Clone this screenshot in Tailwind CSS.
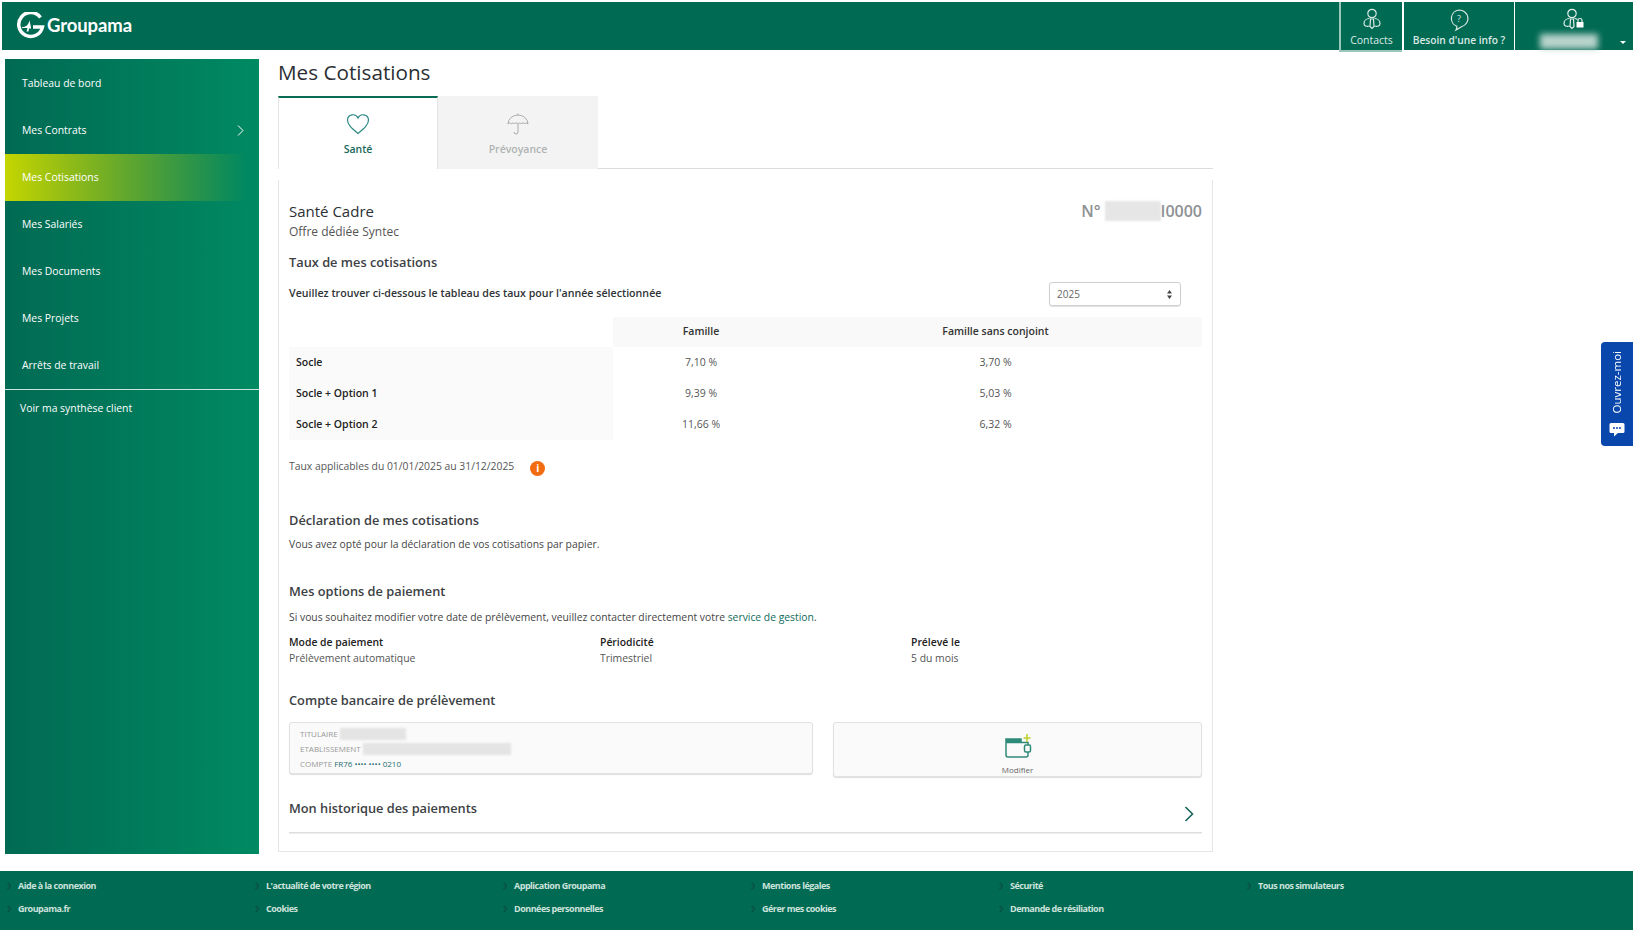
<!DOCTYPE html>
<html lang="fr">
<head>
  <meta charset="UTF-8" />
  <title>Mes Cotisations</title>
  <script src="https://cdn.jsdelivr.net/npm/@tailwindcss/browser@4"></script>
</head>
<body class="relative h-[930px] w-[1633px] overflow-hidden bg-white font-['Open_Sans',sans-serif] text-[#333]">
  <!-- header -->
  <header class="ml-[2px] mt-[2px] flex h-[48px] items-stretch justify-between bg-[#016a53] pr-[2px] text-white">
    <div class="flex items-center pl-[14px]">
      <svg width="30" height="28" viewBox="0 0 30 28" fill="none" stroke="#fff">
        <path d="M24.500 5.500A12 12 0 1 0 26.500 15H17" stroke-width="3.500" />
        <path d="M6 15c4 0 6-1.500 7.500-6.500.7 3 1 5 1.500 6.500v1.500h-2l-.5 3h-2l1-3.500H6z" fill="#fff" stroke="none" />
      </svg>
      <span class="ml-[1px] font-['Lato',sans-serif] text-[18.500px] font-bold tracking-[-0.1px]">Groupama</span>
    </div>
    <div class="flex">
      <div class="flex h-[50px] w-[63px] flex-col items-center border-b-2 border-l-2 border-[#9cc7bb]">
        <svg class="mt-[6px]" width="22" height="22" viewBox="0 0 22 22" fill="none" stroke="#d9e9e4" stroke-width="1.200">
          <circle cx="11" cy="5.500" r="4.200" />
          <path d="M8.500 10.500C5 10.500 3 13 3 15.500S5.500 19 8.500 18M13.500 10.500c3.500 0 5.500 2.500 5.500 5s-2.500 3.500-5.500 2.500" />
          <path d="M9.500 11h3l.5 7.500-2 2-2-2z" />
        </svg>
        <span class="mt-[2px] text-[10.500px] leading-[16px] text-[#dcebe6]">Contacts</span>
      </div>
      <div class="flex w-[113px] flex-col items-center border-l-2 border-r border-white">
        <svg class="mt-[6px]" width="22" height="24" viewBox="0 0 22 24" fill="none" stroke="#d9e9e4" stroke-width="1.200">
          <path d="M11 2a9 8.500 0 0 1 3 16.500c-2 .7-4 2.500-6 3.500.8-1.500 1-2.500.8-3.700A8.700 8.500 0 0 1 11 2z" />
          <text x="11" y="14" text-anchor="middle" font-size="9" fill="#d9e9e4" stroke="none" font-family="Open Sans">?</text>
        </svg>
        <span class="text-[10.200px] font-semibold leading-[16px] text-[#dcebe6]">Besoin d'une info ?</span>
      </div>
      <div class="relative flex w-[116px] flex-col items-center">
        <svg class="mt-[6px] ml-[2px]" width="24" height="22" viewBox="0 0 24 22" fill="none" stroke="#e3efeb" stroke-width="1.200">
          <circle cx="10" cy="5.500" r="4.200" />
          <path d="M7.500 10.500C4 10.500 2 13 2 15.500S4.500 19 7.500 18M12.500 10.500c1 0 2 .3 3 .9" />
          <path d="M8.500 11h3l.5 7.500-2 2-2-2z" />
          <rect x="14.500" y="14" width="7" height="5.500" fill="#fff" stroke="none" />
          <path d="M16 14v-1.500a2 2 0 0 1 4 0V14" />
        </svg>
        <div class="mt-[4px] h-[15px] w-[58px] -translate-x-[4px] bg-[#b9d4cc] blur-[3px]"></div>
        <span class="absolute bottom-[6px] right-[5px] h-0 w-0 border-x-[3px] border-t-[3px] border-x-transparent border-t-white"></span>
      </div>
    </div>
  </header>

  <div class="flex items-start">
    <!-- sidebar -->
    <aside class="ml-[5px] mt-[9px] h-[795px] w-[254px] bg-gradient-to-r from-[#016a53] to-[#008a62] pt-px text-[10.400px] text-white">
      <nav class="border-b border-[#cfe3dd]">
        <a class="flex h-[47px] items-center pl-[17px]">Tableau de bord</a>
        <a class="flex h-[47px] items-center justify-between pl-[17px] pr-[15px]">Mes Contrats
          <svg width="7" height="11" viewBox="0 0 7 11" fill="none" stroke="#fff" stroke-width="1"><path d="M1 .5l5 5-5 5" /></svg>
        </a>
        <a class="flex h-[47px] items-center bg-gradient-to-r from-[#c4d600] to-[#008a62]/0 to-95% pl-[17px]">Mes Cotisations</a>
        <a class="flex h-[47px] items-center pl-[17px]">Mes Salariés</a>
        <a class="flex h-[47px] items-center pl-[17px]">Mes Documents</a>
        <a class="flex h-[47px] items-center pl-[17px]">Mes Projets</a>
        <a class="flex h-[47px] items-center pl-[17px]">Arrêts de travail</a>
      </nav>
      <a class="mt-[9px] block pl-[15px] leading-[18px]">Voir ma synthèse client</a>
    </aside>

    <main class="ml-[19px] w-[935px]">
      <h1 class="mt-[5px] h-[41px] text-[20.700px] leading-[35px] text-[#2b2f33]">Mes Cotisations</h1>
      <!-- tabs -->
      <div class="flex h-[73px] border-b border-[#dcdcdc]">
        <div class="flex h-[73px] w-[160px] flex-col items-center border-x border-t-2 border-x-[#e3e3e3] border-t-[#0a6b54] bg-white">
          <svg class="mt-[15px]" width="24" height="22" viewBox="0 0 24 22" fill="none" stroke="#2c8a83" stroke-width="1.200">
            <path d="M12 20.500C6 15.500 1.500 12 1.500 7A5.500 5.500 0 0 1 12 5a5.500 5.500 0 0 1 10.500 2c0 5-4.500 8.500-10.500 13.500z" />
          </svg>
          <span class="mt-[6px] text-[10.500px] font-semibold leading-[16px] text-[#17685a]">Santé</span>
        </div>
        <div class="flex h-[73px] w-[160px] flex-col items-center bg-[#f3f3f3]">
          <svg class="mt-[16px]" width="24" height="24" viewBox="0 0 24 24" fill="none" stroke="#a9adad" stroke-width="1">
            <path d="M2 12a10 9 0 0 1 20 0c-1.500-1.500-2.500-1.500-3.300 0-1-1.500-2.500-1.500-3.300 0-1-1.500-2.500-1.500-3.400 0-1-1.500-2.500-1.500-3.400 0-1-1.500-2.300-1.500-3.300 0-1-1.500-3.300-1.500-3.300 0z" />
            <path d="M12 3V1.500M12 12v8a2 2 0 0 1-4 0" />
          </svg>
          <span class="mt-[5px] text-[10.500px] font-semibold leading-[16px] text-[#b0b3b3]">Prévoyance</span>
        </div>
      </div>

      <!-- card -->
      <section class="mt-[11px] h-[672px] border border-t-0 border-[#e6e6e6] px-[10px] pt-[21px]">
        <div class="flex h-[20px] items-center justify-between">
          <h2 class="text-[15px] text-[#2b2f33]">Santé Cadre</h2>
          <div class="flex items-center text-[16px] font-semibold text-[#8d9193]">N°
            <span class="ml-[4px] h-[20px] w-[56px] bg-[#e6e6e6] blur-[1px]"></span>
            <span>I0000</span>
          </div>
        </div>
        <p class="mt-[1px] text-[12px] leading-[20px] text-[#555]">Offre dédiée Syntec</p>
        <h3 class="mt-[10px] text-[12.800px] font-semibold leading-[20px] text-[#3c4144]">Taux de mes cotisations</h3>
        <div class="mt-[9px] flex h-[26px] items-center justify-between pr-[21px]">
          <p class="text-[10.650px] font-semibold text-[#2f3336]">Veuillez trouver ci-dessous le tableau des taux pour l'année sélectionnée</p>
          <div class="flex h-[24px] w-[132px] items-center justify-between rounded-[3px] border border-[#cfcfcf] pl-[7px] pr-[8px] text-[10px] text-[#666] shadow-[0_1px_1px_#e2e2e2]">
            2025
            <svg width="5" height="9" viewBox="0 0 5 9" fill="#444"><path d="M2.500 0l2.500 3.500H0zM2.500 9L0 5.500h5z" /></svg>
          </div>
        </div>
        <!-- rates table -->
        <div class="mt-[10px] grid grid-cols-[324px_176px_413px] text-[10.500px]">
          <div class="h-[30px]"></div>
          <div class="flex h-[30px] items-center justify-center bg-[#f9f9f9] font-semibold text-[#333]">Famille</div>
          <div class="flex h-[30px] items-center justify-center bg-[#f9f9f9] font-semibold text-[#333]">Famille sans conjoint</div>
          <div class="flex h-[31px] items-center bg-[#fafafa] pl-[7px] font-semibold text-[#222]">Socle</div>
          <div class="flex h-[31px] items-center justify-center text-[#555]">7,10 %</div>
          <div class="flex h-[31px] items-center justify-center text-[#555]">3,70 %</div>
          <div class="flex h-[31px] items-center bg-[#fafafa] pl-[7px] font-semibold text-[#222]">Socle + Option 1</div>
          <div class="flex h-[31px] items-center justify-center text-[#555]">9,39 %</div>
          <div class="flex h-[31px] items-center justify-center text-[#555]">5,03 %</div>
          <div class="flex h-[31px] items-center bg-[#fafafa] pl-[7px] font-semibold text-[#222]">Socle + Option 2</div>
          <div class="flex h-[31px] items-center justify-center text-[#555]">11,66 %</div>
          <div class="flex h-[31px] items-center justify-center text-[#555]">6,32 %</div>
        </div>
        <div class="mt-[17px] flex h-[20px] items-center text-[10.350px] text-[#555]">
          Taux applicables du 01/01/2025 au 31/12/2025
          <span class="ml-[16px] mt-[2px] flex h-[15px] w-[15px] items-center justify-center rounded-full bg-[#f26c11] text-[10px] font-bold leading-none text-white">i</span>
        </div>

        <h3 class="mt-[33px] text-[12.800px] font-semibold leading-[20px] text-[#3c4144]">Déclaration de mes cotisations</h3>
        <p class="mt-[4px] text-[10.350px] leading-[20px] text-[#444]">Vous avez opté pour la déclaration de vos cotisations par papier.</p>

        <h3 class="mt-[27px] text-[12.800px] font-semibold leading-[20px] text-[#3c4144]">Mes options de paiement</h3>
        <p class="mt-[6px] text-[10.350px] leading-[20px] text-[#444]">Si vous souhaitez modifier votre date de prélèvement, veuillez contacter directement votre <span class="text-[#0f6b5a]">service de gestion</span>.</p>
        <div class="mt-[7px] grid grid-cols-[311px_311px_1fr] text-[10.400px] leading-[16px]">
          <div><p class="font-semibold text-[#222]">Mode de paiement</p><p class="text-[#555]">Prélèvement automatique</p></div>
          <div><p class="font-semibold text-[#222]">Périodicité</p><p class="text-[#555]">Trimestriel</p></div>
          <div><p class="font-semibold text-[#222]">Prélevé le</p><p class="text-[#555]">5 du mois</p></div>
        </div>

        <h3 class="mt-[24px] text-[12.800px] font-semibold leading-[20px] text-[#3c4144]">Compte bancaire de prélèvement</h3>
        <div class="mt-[12px] flex items-start justify-between">
          <div class="h-[52px] w-[524px] rounded-[3px] border border-[#e2e2e2] bg-[#fafafa] pl-[10px] pt-[3px] text-[8px] leading-[15px] text-[#999] shadow-[0_1px_1px_#dedede]">
            <div class="flex items-center">TITULAIRE<span class="ml-[2px] h-[12px] w-[66px] bg-[#e4e4e4] blur-[1px]"></span></div>
            <div class="flex items-center">ETABLISSEMENT<span class="ml-[2px] h-[12px] w-[148px] bg-[#e4e4e4] blur-[1px]"></span></div>
            <div>COMPTE <span class="text-[#276d74]">FR76 •••• •••• 0210</span></div>
          </div>
          <div class="flex h-[55px] w-[369px] flex-col items-center rounded-[3px] border border-[#e2e2e2] bg-[#fafafa] shadow-[0_1px_1px_#dedede]">
            <svg class="mt-[11px]" width="28" height="25" viewBox="0 0 28 25" fill="none" stroke="#2f8a78" stroke-width="1.500">
              <path d="M2 8.500V21a2 2 0 0 0 2 2h18a2 2 0 0 0 2-2v-3M2 8.500h22V11" />
              <path d="M2 8V5h15v3h-15z" fill="#2f8a78" />
              <rect x="20.500" y="11" width="6" height="7" rx="1.500" />
              <path d="M23 0v8M19.500 4h7" stroke="#bcd02a" />
            </svg>
            <span class="mt-[5px] text-[8px] leading-[11px] text-[#666]">Modifier</span>
          </div>
        </div>
        <div class="mt-[21px] flex h-[35px] items-start justify-between border-b border-[#dedede] shadow-[0_1px_0_#eee]">
          <h3 class="text-[12.800px] font-semibold leading-[20px] text-[#3c4144]">Mon historique des paiements</h3>
          <svg class="mr-[8px] mt-[8px]" width="10" height="16" viewBox="0 0 10 16" fill="none" stroke="#17635a" stroke-width="1.600"><path d="M1.500 1l7 7-7 7" /></svg>
        </div>
      </section>
    </main>
  </div>

  <!-- footer -->
  <footer class="absolute bottom-0 left-0 h-[59px] w-full bg-[#016a53] pl-[7px] pt-[7px] text-[9px] font-bold tracking-[-0.5px] text-[#cde3dc]">
    <div class="grid grid-cols-[repeat(6,248px)] gap-y-[7px] leading-[16px]">
      <a class="flex items-center gap-[7px]"><svg width="4" height="8" viewBox="0 0 4 8" fill="none" stroke="#0b4f40" stroke-width="1.200"><path d="M.5.500L3.500 4 .5 7.500" /></svg>Aide à la connexion</a>
      <a class="flex items-center gap-[7px]"><svg width="4" height="8" viewBox="0 0 4 8" fill="none" stroke="#0b4f40" stroke-width="1.200"><path d="M.5.500L3.500 4 .5 7.500" /></svg>L'actualité de votre région</a>
      <a class="flex items-center gap-[7px]"><svg width="4" height="8" viewBox="0 0 4 8" fill="none" stroke="#0b4f40" stroke-width="1.200"><path d="M.5.500L3.500 4 .5 7.500" /></svg>Application Groupama</a>
      <a class="flex items-center gap-[7px]"><svg width="4" height="8" viewBox="0 0 4 8" fill="none" stroke="#0b4f40" stroke-width="1.200"><path d="M.5.500L3.500 4 .5 7.500" /></svg>Mentions légales</a>
      <a class="flex items-center gap-[7px]"><svg width="4" height="8" viewBox="0 0 4 8" fill="none" stroke="#0b4f40" stroke-width="1.200"><path d="M.5.500L3.500 4 .5 7.500" /></svg>Sécurité</a>
      <a class="flex items-center gap-[7px]"><svg width="4" height="8" viewBox="0 0 4 8" fill="none" stroke="#0b4f40" stroke-width="1.200"><path d="M.5.500L3.500 4 .5 7.500" /></svg>Tous nos simulateurs</a>
      <a class="flex items-center gap-[7px]"><svg width="4" height="8" viewBox="0 0 4 8" fill="none" stroke="#0b4f40" stroke-width="1.200"><path d="M.5.500L3.500 4 .5 7.500" /></svg>Groupama.fr</a>
      <a class="flex items-center gap-[7px]"><svg width="4" height="8" viewBox="0 0 4 8" fill="none" stroke="#0b4f40" stroke-width="1.200"><path d="M.5.500L3.500 4 .5 7.500" /></svg>Cookies</a>
      <a class="flex items-center gap-[7px]"><svg width="4" height="8" viewBox="0 0 4 8" fill="none" stroke="#0b4f40" stroke-width="1.200"><path d="M.5.500L3.500 4 .5 7.500" /></svg>Données personnelles</a>
      <a class="flex items-center gap-[7px]"><svg width="4" height="8" viewBox="0 0 4 8" fill="none" stroke="#0b4f40" stroke-width="1.200"><path d="M.5.500L3.500 4 .5 7.500" /></svg>Gérer mes cookies</a>
      <a class="flex items-center gap-[7px]"><svg width="4" height="8" viewBox="0 0 4 8" fill="none" stroke="#0b4f40" stroke-width="1.200"><path d="M.5.500L3.500 4 .5 7.500" /></svg>Demande de résiliation</a>
    </div>
  </footer>

  <!-- chat tab -->
  <div class="absolute right-0 top-[342px] flex h-[104px] w-[32px] flex-col items-center justify-between rounded-l-[4px] bg-[#0a47ad] py-[9px] text-white">
    <span class="rotate-180 text-[11.500px] leading-[16px] [writing-mode:vertical-rl]">Ouvrez-moi</span>
    <svg width="16" height="15" viewBox="0 0 16 15" fill="#fff"><path d="M2 1h12a1.500 1.500 0 0 1 1.500 1.500v7A1.500 1.500 0 0 1 14 11H9l-4 3.500V11H2A1.500 1.500 0 0 1 .5 9.500v-7A1.500 1.500 0 0 1 2 1z" /><circle cx="5" cy="6" r="1" fill="#0a47ad" /><circle cx="8" cy="6" r="1" fill="#0a47ad" /><circle cx="11" cy="6" r="1" fill="#0a47ad" /></svg>
  </div>
</body>
</html>
